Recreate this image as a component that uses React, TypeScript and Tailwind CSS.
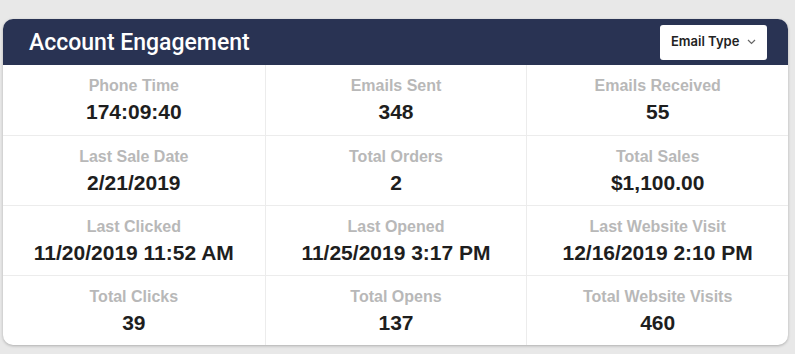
import React from 'react';

const stats: { label: string; value: string }[][] = [
  [
    { label: 'Phone Time', value: '174:09:40' },
    { label: 'Emails Sent', value: '348' },
    { label: 'Emails Received', value: '55' },
  ],
  [
    { label: 'Last Sale Date', value: '2/21/2019' },
    { label: 'Total Orders', value: '2' },
    { label: 'Total Sales', value: '$1,100.00' },
  ],
  [
    { label: 'Last Clicked', value: '11/20/2019 11:52 AM' },
    { label: 'Last Opened', value: '11/25/2019 3:17 PM' },
    { label: 'Last Website Visit', value: '12/16/2019 2:10 PM' },
  ],
  [
    { label: 'Total Clicks', value: '39' },
    { label: 'Total Opens', value: '137' },
    { label: 'Total Website Visits', value: '460' },
  ],
];

export default function App() {
  return (
    <div className="w-[795px] h-[354px] bg-[#e8e8e8] pt-[19px] pl-[3px] overflow-hidden">
      <div className="w-[785px] rounded-[10px] bg-white shadow-[0_1px_3px_rgba(0,0,0,0.25)] overflow-hidden">
        {/* Header */}
        <div className="h-[46px] bg-[#293353] flex items-center justify-between pl-[26px] pr-[21px]">
          <h2 className="text-white text-[23px] font-medium font-['Roboto',sans-serif] leading-none">
            Account Engagement
          </h2>
          <button className="h-[35px] w-[107px] bg-white rounded-[3px] flex items-center pl-[11px] gap-[8px] text-[13px] font-semibold text-[#222] font-['Inter',sans-serif]">
            Email Type
            <svg width="9" height="6" viewBox="0 0 9 6" fill="none" stroke="#666" strokeWidth="1.2">
              <path d="M1 1l3.5 3.5L8 1" />
            </svg>
          </button>
        </div>

        {/* Stats grid */}
        <div className="font-['Liberation_Sans',Arial,sans-serif]">
          {stats.map((row, i) => (
            <div key={i} className={`grid grid-cols-3 h-[70px] ${i > 0 ? 'border-t border-[#ececec]' : ''}`}>
              {row.map((s, j) => (
                <div
                  key={s.label}
                  className={`flex flex-col items-center pt-[11px] ${j > 0 ? 'border-l border-[#ececec]' : ''}`}
                >
                  <span className="text-[16px] font-bold text-[#b8b8b8] leading-[20px]">{s.label}</span>
                  <span className="text-[21px] font-bold text-[#1e1e1e] leading-[26px] mt-[3px]">{s.value}</span>
                </div>
              ))}
            </div>
          ))}
        </div>
      </div>
    </div>
  );
}
